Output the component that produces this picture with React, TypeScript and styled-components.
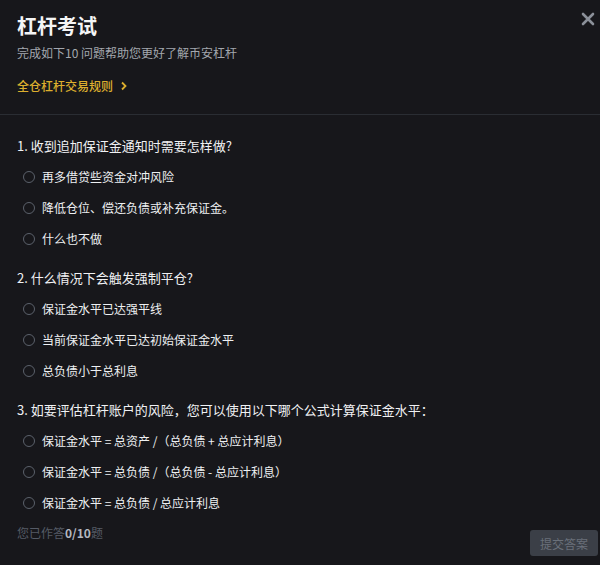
import styled, { createGlobalStyle } from "styled-components";

const GlobalStyle = createGlobalStyle`
  html, body {
    margin: 0;
    padding: 0;
    background: #17171b;
  }
  body {
    font-family: "Noto Sans CJK SC", "Noto Sans", "Liberation Sans", sans-serif;
    color: #eaecef;
  }
`;

const Modal = styled.div`
  position: relative;
  width: 600px;
  height: 565px;
  background: #17171b;
  overflow: hidden;
`;

const Header = styled.div`
  padding: 12px 17px 18px;
  border-bottom: 1px solid #2a2d33;
`;

const Title = styled.h2`
  margin: 0;
  font-size: 20px;
  line-height: 28px;
  font-weight: 700;
  color: #f4f5f6;
`;

const Subtitle = styled.p`
  margin: 3px 0 0;
  font-size: 12px;
  line-height: 20px;
  color: #a3a7ae;
`;

const RuleLink = styled.a`
  display: inline-flex;
  align-items: center;
  gap: 7px;
  margin-top: 13px;
  font-size: 12px;
  line-height: 20px;
  font-weight: 500;
  color: #dcae2e;
  text-decoration: none;
  cursor: pointer;
`;

const CloseButton = styled.button`
  position: absolute;
  top: 12px;
  right: 5px;
  width: 14px;
  height: 14px;
  padding: 0;
  border: 0;
  background: none;
  cursor: pointer;
`;

const Body = styled.div`
  padding: 21px 17px 0;
  display: flex;
  flex-direction: column;
  gap: 14px;
`;

const Question = styled.div`
  display: flex;
  flex-direction: column;
`;

const QuestionTitle = styled.div`
  font-size: 13px;
  line-height: 20px;
  font-weight: 400;
  color: #f0f1f3;
  margin-bottom: 5px;
`;

const Option = styled.label`
  display: flex;
  align-items: center;
  height: 31px;
  padding-left: 6px;
  gap: 7px;
  font-size: 12px;
  color: #eef0f2;
  cursor: pointer;
`;

const Radio = styled.span`
  width: 10px;
  height: 10px;
  border-radius: 50%;
  border: 1.5px solid #5b616b;
  flex-shrink: 0;
`;

const Footer = styled.div`
  display: flex;
  justify-content: space-between;
  align-items: flex-start;
  margin-top: -9px;
  margin-right: -15px;
`;

const Progress = styled.div`
  font-size: 12px;
  line-height: 20px;
  color: #555b66;
  b {
    color: #b4b9c1;
    font-weight: 700;
  }
`;

const SubmitButton = styled.button`
  margin-top: 7px;
  width: 68px;
  height: 26px;
  border: 0;
  border-radius: 3px;
  background: #3b3f47;
  color: #6a707a;
  font-family: inherit;
  font-size: 12px;
  cursor: not-allowed;
`;

const questions = [
  {
    title: "1. 收到追加保证金通知时需要怎样做?",
    options: ["再多借贷些资金对冲风险", "降低仓位、偿还负债或补充保证金。", "什么也不做"],
  },
  {
    title: "2. 什么情况下会触发强制平仓?",
    options: ["保证金水平已达强平线", "当前保证金水平已达初始保证金水平", "总负债小于总利息"],
  },
  {
    title: "3. 如要评估杠杆账户的风险，您可以使用以下哪个公式计算保证金水平：",
    options: [
      "保证金水平 = 总资产 /（总负债 + 总应计利息）",
      "保证金水平 = 总负债 /（总负债 - 总应计利息）",
      "保证金水平 = 总负债 / 总应计利息",
    ],
  },
];

function App() {
  return (
    <Modal>
      <GlobalStyle />
      <CloseButton aria-label="close">
        <svg width="14" height="14" viewBox="0 0 14 14">
          <path d="M2 2 L12 12 M12 2 L2 12" stroke="#8b9099" strokeWidth="2.6" strokeLinecap="round" />
        </svg>
      </CloseButton>
      <Header>
        <Title>杠杆考试</Title>
        <Subtitle>完成如下10 问题帮助您更好了解币安杠杆</Subtitle>
        <RuleLink>
          全仓杠杆交易规则
          <svg width="8" height="10" viewBox="0 0 8 10">
            <path d="M2 1.5 L5.5 5 L2 8.5" stroke="#dcae2e" strokeWidth="1.8" fill="none" />
          </svg>
        </RuleLink>
      </Header>
      <Body>
        {questions.map((q) => (
          <Question key={q.title}>
            <QuestionTitle>{q.title}</QuestionTitle>
            {q.options.map((opt) => (
              <Option key={opt}>
                <Radio />
                {opt}
              </Option>
            ))}
          </Question>
        ))}
        <Footer>
          <Progress>
            您已作答<b>0/10</b>题
          </Progress>
          <SubmitButton disabled>提交答案</SubmitButton>
        </Footer>
      </Body>
    </Modal>
  );
}

export default App;
